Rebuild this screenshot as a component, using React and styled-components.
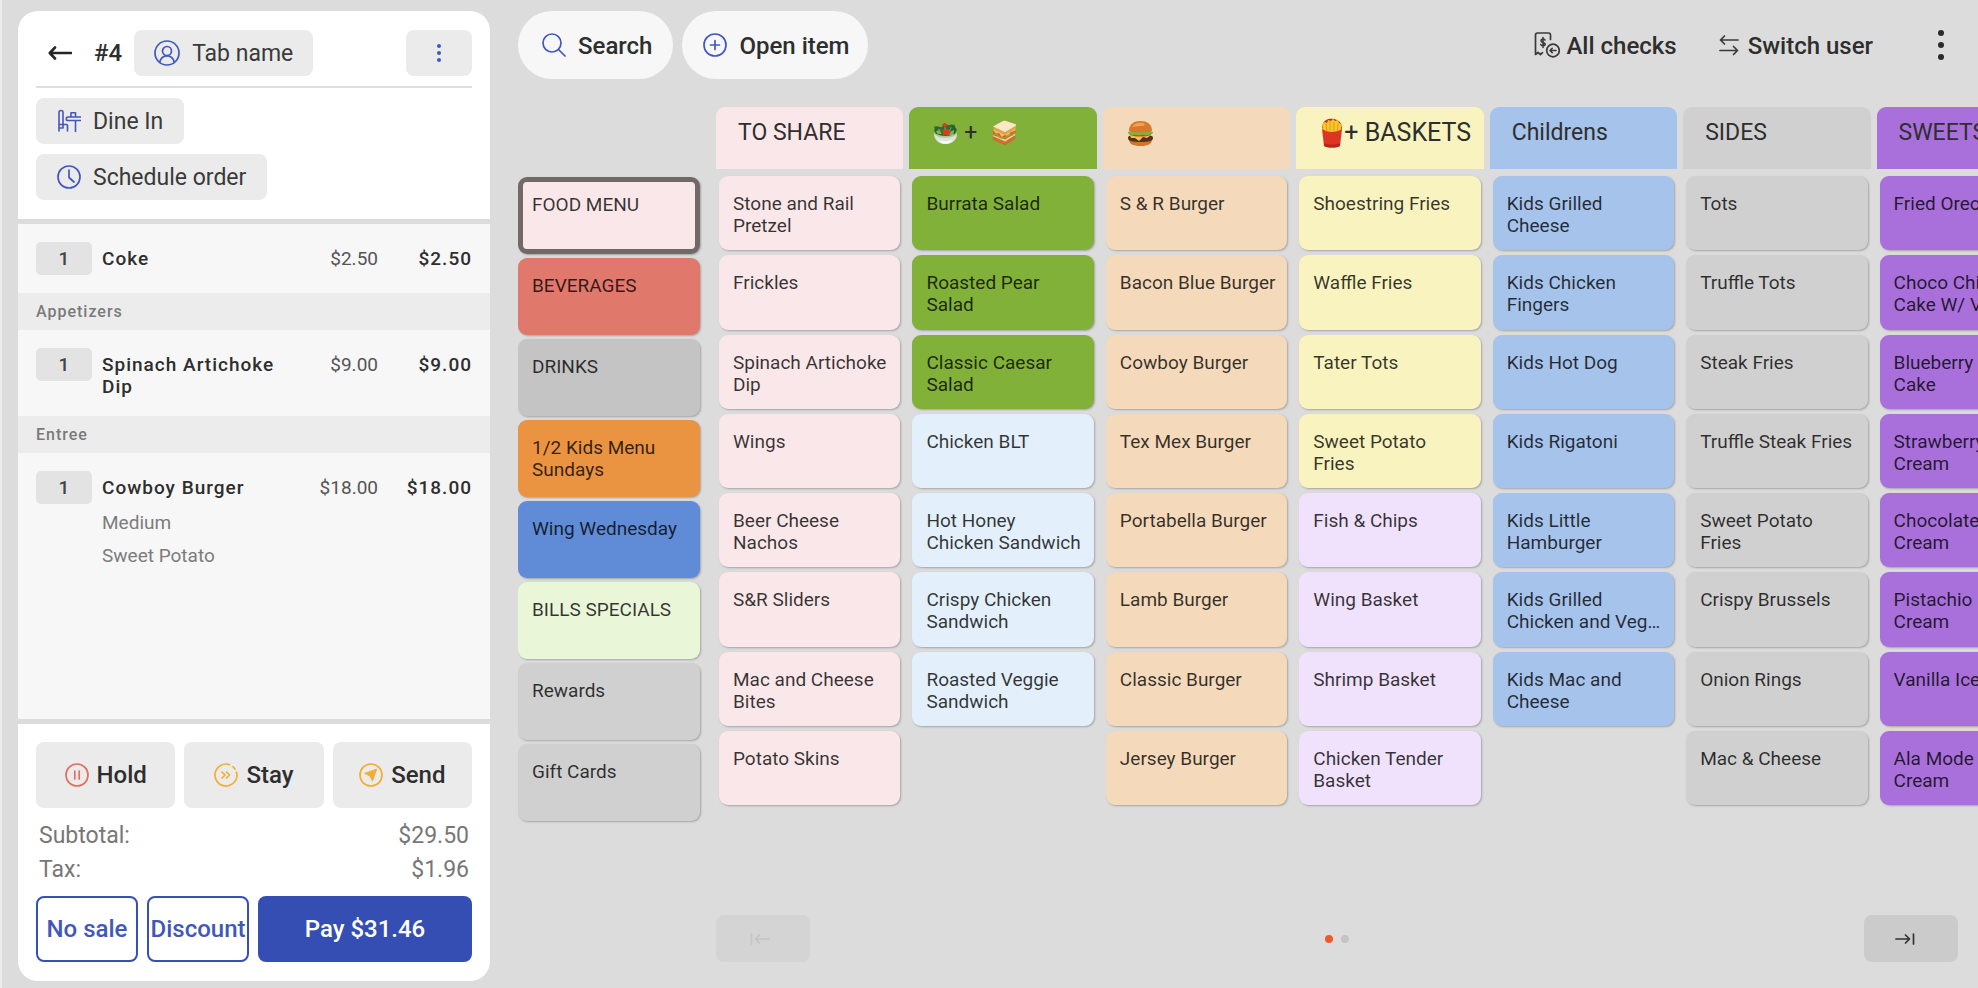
import React from "react";
import styled, { createGlobalStyle } from "styled-components";

const GlobalStyle = createGlobalStyle`
  *, *::before, *::after { box-sizing: border-box; }
  body {
    margin: 0;
    background: #dcdcdc;
    color: #2e2e2e;
    font-family: Roboto, "Liberation Sans", sans-serif;
    overflow: hidden;
  }
  button { font: inherit; color: inherit; border: 0; cursor: pointer; }
  h2, h3, ul, dl, dd, p { margin: 0; padding: 0; }
  ul { list-style: none; }
`;

const Page = styled.div`
  display: flex;
  height: 100vh;
  min-height: 840px;
  border-left: 2px solid #ececec;
  padding: 11px 0 7px 16px;
  gap: 28px;
`;

/* ---------- Check panel ---------- */

const Panel = styled.aside`
  flex: 0 0 472px;
  display: flex;
  flex-direction: column;
  background: #fff;
  border-radius: 20px;
  overflow: hidden;
`;

const PanelHeader = styled.header`
  padding: 19px 18px;
  border-bottom: 5px solid #dcdcdc;
`;

const HeaderRow = styled.div`
  display: flex;
  align-items: center;
  padding-bottom: 10px;
  border-bottom: 2px solid #dedede;
`;

const IconButton = styled.button`
  display: flex;
  padding: 10px 12px;
  background: none;
`;

const CheckNumber = styled.h2`
  margin: 0 12px 0 10px;
  font-size: 24px;
  line-height: 28px;
  font-weight: 500;
`;

const Chip = styled.button`
  display: flex;
  align-items: center;
  justify-content: center;
  gap: 12px;
  height: 46px;
  min-width: 66px;
  padding: 0 20px;
  background: #ebebeb;
  border-radius: 8px;
  font-size: 23px;
  color: #3a3a3a;
`;

const MoreChip = styled(Chip)`
  margin-left: auto;
`;

const ChipStack = styled.div`
  display: flex;
  flex-direction: column;
  align-items: flex-start;
  gap: 10px;
  padding-top: 10px;
`;

const OptionChip = styled(Chip)`
  padding: 0 21px;
`;

const Items = styled.div`
  flex: 1;
  background: #f7f7f7;
  overflow: hidden;
`;

const Course = styled.h3`
  padding: 0 18px;
  background: #ececec;
  font-size: 16px;
  line-height: 37px;
  font-weight: 500;
  letter-spacing: 1px;
  color: #7a7a7a;
`;

const Line = styled.div`
  display: grid;
  grid-template-columns: 56px 176px 1fr 84px;
  column-gap: 10px;
  padding: 18px 18px 18px;
  font-size: 19px;
  line-height: 22px;
`;

const Qty = styled.span`
  height: 33px;
  border-radius: 5px;
  background: #e3e3e3;
  line-height: 33px;
  text-align: center;
  font-weight: 500;
  color: #444;
`;

const ItemName = styled.span`
  padding-top: 6px;
  font-weight: 500;
  letter-spacing: 1px;
`;

const UnitPrice = styled.span`
  padding-top: 6px;
  text-align: right;
  color: #555;
`;

const LineTotal = styled(ItemName)`
  text-align: right;
`;

const Modifiers = styled.ul`
  grid-column: 2 / -1;
  padding-top: 2px;
  line-height: 33px;
  color: #7c7c7c;
`;

const PanelFooter = styled.footer`
  border-top: 5px solid #dcdcdc;
  padding: 18px 18px 19px;
`;

const Actions = styled.div`
  display: grid;
  grid-template-columns: repeat(3, 1fr);
  gap: 9px;
`;

const ActionButton = styled.button`
  display: flex;
  align-items: center;
  justify-content: center;
  gap: 8px;
  height: 66px;
  padding: 0;
  border-radius: 8px;
  background: #ebebeb;
  font-size: 24px;
  font-weight: 500;
`;

const Totals = styled.dl`
  padding: 11px 3px 9px;
`;

const TotalRow = styled.div`
  display: flex;
  justify-content: space-between;
  font-size: 23px;
  line-height: 34px;
  color: #777;
`;

const PayRow = styled.div`
  display: grid;
  grid-template-columns: 102px 102px 1fr;
  gap: 9px;
`;

const OutlineButton = styled(ActionButton)`
  border: 2px solid #3650b4;
  background: #fff;
  color: #3f58ba;
`;

const PayButton = styled(ActionButton)`
  background: #354eb3;
  color: #fff;
`;

/* ---------- Menu area ---------- */

const Main = styled.main`
  flex: 1;
  min-width: 0;
  display: flex;
  flex-direction: column;
  overflow: hidden;
`;

const Toolbar = styled.nav`
  display: flex;
  align-items: center;
  gap: 9px;
  height: 68px;
  padding-right: 21px;
`;

const PillButton = styled.button`
  display: flex;
  align-items: center;
  gap: 12px;
  height: 68px;
  padding: ${(p) => (p.$tight ? "0 18px 0 21px" : "0 21px 0 24px")};
  border-radius: 34px;
  background: #f7f7f7;
  font-size: 24px;
  font-weight: 500;
`;

const TextButton = styled.button`
  display: flex;
  align-items: center;
  gap: ${(p) => (p.$wide ? 9 : 6)}px;
  padding: 0;
  background: none;
  font-size: 24px;
  font-weight: 500;
`;

const ToolbarEnd = styled.div`
  display: flex;
  align-items: center;
  gap: 42px;
  margin-left: auto;
`;

const MoreButton = styled.button`
  display: flex;
  margin-left: 10px;
  padding: 8px 12px;
  background: none;
`;

const ButtonText = styled.span`
  padding-top: 2px;
`;

const Content = styled.div`
  flex: 1;
  min-height: 0;
  display: flex;
  gap: 16px;
  padding-top: 28px;
`;

const Tile = styled.button`
  display: block;
  width: 100%;
  min-width: 0;
  padding: 4px 10px 0 14px;
  border-radius: 9px;
  background: ${(p) => p.$color};
  box-shadow: 1px 1px 2px rgba(0, 0, 0, 0.25);
  text-align: left;
  font-size: 19px;
  line-height: 22px;
  color: rgba(0, 0, 0, 0.78);
`;

const TileLabel = styled.span`
  display: -webkit-box;
  -webkit-box-orient: vertical;
  -webkit-line-clamp: 2;
  height: 44px;
  overflow: hidden;
`;

const Categories = styled.div`
  flex: 0 0 182px;
  display: flex;
  flex-direction: column;
  gap: 4px;
  padding-top: 70px;
`;

const CategoryTile = styled(Tile)`
  height: 77px;
  padding: 0 ${(p) => (p.$selected ? 9 : 14)}px;
  border: ${(p) => (p.$selected ? "5px solid #716868" : "0")};
`;

const Board = styled.div`
  flex: 1;
  min-width: 0;
  display: flex;
  flex-direction: column;
`;

const Columns = styled.div`
  display: grid;
  grid-template-columns: repeat(7, minmax(0, 1fr));
  column-gap: 6px;
  flex: 1;
  min-height: 0;
  margin-right: -86px;
`;

const Column = styled.section`
  display: flex;
  flex-direction: column;
`;

const ColumnTitle = styled.h2`
  display: flex;
  align-items: center;
  height: 62px;
  padding: 0 0 10px 22px;
  border-radius: 9px 9px 0 0;
  background: ${(p) => p.$color};
  font-size: ${(p) => (p.$large ? 25 : 23)}px;
  line-height: 28px;
  font-weight: 400;
  white-space: pre;
`;

const ColumnTiles = styled.div`
  flex: 1;
  display: grid;
  grid-template-rows: repeat(8, minmax(0, 1fr));
  row-gap: 5px;
  padding: 7px 3px 0;
`;

const Pager = styled.div`
  display: flex;
  align-items: center;
  justify-content: space-between;
  padding: 110px 20px 19px 0;
`;

const PageButton = styled.button`
  display: flex;
  align-items: center;
  justify-content: center;
  width: 94px;
  height: 47px;
  padding: 0 12px 0 0;
  border-radius: 8px;
  background: #cbcbcb;
  &:disabled { background: #d4d4d4; color: #c4c4c4; padding: 0 6px 0 0; }
`;

const Dots = styled.div`
  display: flex;
  gap: 8px;
`;

const Dot = styled.span`
  width: 8px;
  height: 8px;
  border-radius: 50%;
  background: ${(p) => (p.$active ? "#f1592a" : "#c4c4c4")};
`;

/* ---------- Icons ---------- */

const Svg = ({ size = 24, w, h, box, children, color = "#4058c0", sw = 2 }) => (
  <svg
    width={w || size}
    height={h || size}
    viewBox={box || `0 0 ${w || size} ${h || size}`}
    fill="none"
    stroke={color}
    strokeWidth={sw}
    strokeLinecap="round"
    strokeLinejoin="round"
    aria-hidden="true"
  >
    {children}
  </svg>
);

const BackIcon = () => (
  <Svg w={24} h={16} color="#262626" sw={2.6}>
    <path d="M2 8h21M7 2.500 1.800 8 7 13.500" />
  </Svg>
);
const UserIcon = () => (
  <Svg size={26} sw={1.700}>
    <circle cx="13" cy="13" r="12" />
    <circle cx="13" cy="11" r="4.500" />
    <path d="M5.800 22c1-4 3.600-6.200 7.200-6.200s6.200 2.200 7.200 6.200" />
  </Svg>
);
const DotsIcon = ({ w, h, r, color }) => (
  <Svg w={w} h={h}>
    {[r, h / 2, h - r].map((y) => (
      <circle key={y} cx={w / 2} cy={y} r={r} fill={color} stroke="none" />
    ))}
  </Svg>
);
const DineIcon = () => (
  <Svg size={24} sw={1.600}>
    <path d="M2 22V3.500a2 2 0 0 1 4 0v11.500M2 15.500h7.500a1 1 0 0 1 1 1V22M2 19h4v-3.500" />
    <path d="M23.500 8H11a1.700 1.700 0 0 0 0 3.500h12.500M18.500 11.500V22.500M14 8V3.800h4.500V8" />
  </Svg>
);
const ClockIcon = () => (
  <Svg size={24} sw={1.700}>
    <circle cx="12" cy="12" r="11" />
    <path d="M12 5v7.500l5 4.500" />
  </Svg>
);
const HoldIcon = () => (
  <Svg size={24} color="#e0705f" sw={1.700}>
    <circle cx="12" cy="12" r="11" />
    <path d="M9.800 8v8M14.200 8v8" />
  </Svg>
);
const StayIcon = () => (
  <Svg size={24} color="#f2ae33" sw={1.700}>
    <path d="M15.500 1.600A11 11 0 1 0 23 12.500c0-1.200-.2-2.300-.5-3.300M19 3.700l2 2.300" />
    <path d="m8 9 3 3-3 3M12.500 9l3 3-3 3" />
  </Svg>
);
const SendIcon = () => (
  <Svg size={24} color="#f2ae33" sw={1.700}>
    <circle cx="12" cy="12" r="11" />
    <path d="m17.500 6.500-4 11.500-2.500-5-5-2.500z" fill="#f2ae33" strokeWidth="1" />
  </Svg>
);
const SearchIcon = () => (
  <Svg size={24} sw={1.700}>
    <circle cx="10" cy="10" r="9" />
    <path d="m16.500 16.500 6.500 6.500" />
  </Svg>
);
const PlusIcon = () => (
  <Svg size={24} sw={1.700}>
    <circle cx="12" cy="12" r="11" />
    <path d="M12 7.500v9M7.500 12h9" />
  </Svg>
);
const ChecksIcon = () => (
  <Svg size={26} color="#3a3a3a" sw={1.700}>
    <path d="M16.500 7.500V3a2 2 0 0 0-2-2h-11a2 2 0 0 0-2 2v19.500l2.500-2 2.500 2 2-1.800" />
    <path d="M11 8c-.4-1.300-4-1.500-4 .8 0 2 4.200 1.300 4.200 3.300 0 2.100-3.900 1.900-4.500.4M9 5.500v10" strokeWidth="1.600" />
    <circle cx="19" cy="18.500" r="6.300" />
    <path d="M22 18.500h-6M18.200 16.300 16 18.500l2.200 2.200" strokeWidth="1.600" />
  </Svg>
);
const SwitchIcon = () => (
  <Svg w={20} h={22} color="#3a3a3a" sw={1.700}>
    <path d="M19 6H1.500M5.500 2 1.500 6l4 4M1 16.500h17.500M14.500 12.500l4 4-4 4" />
  </Svg>
);
const PageIcon = ({ flip }) => (
  <Svg w={20} h={12} color={flip ? "#c4c4c4" : "#333"} sw={1.700}>
    {flip ? (
      <path d="M1.500 1v10M19 6H6M9.500 2 5.500 6l4 4" />
    ) : (
      <path d="M18.500 1v10M1 6h13M10.500 2l4 4-4 4" />
    )}
  </Svg>
);

const Emoji = styled.svg`
  flex: none;
  margin-left: 2px;
`;

const Salad = () => (
  <Emoji width="25" height="24" viewBox="0 0 26 24" role="img" aria-label="Salad">
    <path d="M1 9 4 5l5 1 3-4 4 2 4-1 2 3 3 2-3 7H4z" fill="#2f6b32" />
    <path d="m1 5 5 1 2 4-5 1zM16 8l6-5 2 5-3 5z" fill="#2d5f35" />
    <path d="m3 10 4-1 2 4H5zM17 11l5-2-1 5h-4z" fill="#7fb65a" />
    <path d="M9 3.500l3-2 3 1.500-2 3.500zM9.500 9l4-1.500 3 1 2 3-3 3-2-1-3 1z" fill="#dd3a20" />
    <path d="m5 8 3 1M12 6l1 3M19 6l-2 4" stroke="#5d9a45" strokeWidth="1.500" />
    <path d="M1 11.500c3 2.500 7 3.500 12 3.500s9-1 12-3.500C25 18 21 23.500 13 23.500S1 18 1 11.500z" fill="#a9cf8d" />
    <path d="M1 13c3 3 7 4 12 4s9-1 12-4c-.5 6-5 10.500-12 10.500S1.500 19 1 13z" fill="#dfe3de" />
    <path d="M6 19c4 2 10 2 14 0-1 3-4 4-7 4s-6-1-7-4z" fill="#fafaf8" />
  </Emoji>
);
const Sandwich = () => (
  <Emoji width="26" height="26" viewBox="0 0 26 26" role="img" aria-label="Sandwich">
    <path d="m1.500 16 12.500 5 10.500-6v3.500L14 25.500 1.500 19.500z" fill="#c9702c" />
    <path d="M1.500 16 4 14l10 4 9-5 1.500 2L14 21.500z" fill="#f0cd92" />
    <path d="m2 11 2-2 10 5 10.500-6v5L14 19.500 2 15z" fill="#e0562b" />
    <path d="m2 10 3 3.500 3-.5 2.500 4 3.500-2 3 1.500 2.500-4 5-2V8L14 14 4 9z" fill="#f4c544" />
    <path d="m2.500 14 3.500.5 3 3 5 .5 3-2.500 4-.5 3-3" stroke="#8aa83a" strokeWidth="1.500" fill="none" />
    <path d="M2 6.500 3 10l11 5 10.500-6L25 5.500 14 11z" fill="#dda25a" />
    <path d="M2 6.500 12 1c1-.5 2-.5 3 0l9.500 3.300c.7.300.8.900.3 1.400L14 12z" fill="#fbe9c6" />
  </Emoji>
);
const Burger = () => (
  <Emoji width="27" height="27" viewBox="0 0 27 27" role="img" aria-label="Burger">
    <path d="M2 19h23c0 5-4 7-11.500 7S2 24 2 19z" fill="#cf7428" />
    <path d="M1 18c0-3 4-3 12.500-3S26 15 26 18s-4 4-12.500 4S1 21 1 18z" fill="#59301c" />
    <path d="M3 15h21l-4 3-4-1-4 4-4-3-4 0z" fill="#f2c349" />
    <path d="M3 13h21v2c-6 2-15 2-21 0z" fill="#d6442a" />
    <path d="M1 12c4-2 21-2 25 0 0 3-3 2-5 3-3 1-4-1-7 0-3 1-5-1-8 0-2 0-5 0-5-3z" fill="#7cb53b" />
    <path d="M2 11C2 4 7 1 13.500 1S25 4 25 11c-6 2-17 2-23 0z" fill="#d8782c" />
    <path d="M5 7c2-4 7-5 11-4 3 1 2 3-2 3-4 0-6 1-9 1z" fill="#f0a451" />
  </Emoji>
);
const Fries = () => (
  <Emoji width="24" height="30" viewBox="0 0 22 30" role="img" aria-label="Fries">
    <path d="M1 9C2 2 7 0 13 1c5 1 8 4 8 9l-2 5H3z" fill="#c5281c" />
    <path d="M1 6l3-2 2 1 1-3 3 1 2-2 2 2 3-1 1 3 3 1-2 10H3z" fill="#f7c72c" />
    <path d="M5 6l1 7M9 3v10M13 4v10M17 6l-1 8" stroke="#e09a1c" fill="none" />
    <path d="M1 11c6 4 14 4 20 0l-2 17c-4 2-12 2-16 0z" fill="#de3424" />
    <path d="M3 25c5 2 11 2 16 0v3c-4 2-12 2-16 0z" fill="#b9251b" />
  </Emoji>
);

/* ---------- Data ---------- */

const PINK = "#fae7e9";
const GREEN = "#82b13a";
const PEACH = "#f4d9bb";
const YELLOW = "#f9f4bf";
const BLUE = "#a6c3ec";
const GRAY = "#d0d0d0";
const PURPLE = "#a970dc";
const SKY = "#e3effa";
const LILAC = "#f0e2fc";

const categories = [
  ["FOOD MENU", PINK],
  ["BEVERAGES", "#e0786c"],
  ["DRINKS", "#c4c4c4"],
  ["1/2 Kids Menu Sundays", "#ea9340"],
  ["Wing Wednesday", "#5f8bd7"],
  ["BILLS SPECIALS", "#e9f6d8"],
  ["Rewards", GRAY],
  ["Gift Cards", GRAY],
];

const tiles = (color, names) => names.map((name) => ({ name, color }));

const columns = [
  {
    id: "share",
    title: "TO SHARE",
    color: PINK,
    items: tiles(PINK, ["Stone and Rail Pretzel", "Frickles", "Spinach Artichoke Dip", "Wings", "Beer Cheese Nachos", "S&R Sliders", "Mac and Cheese Bites", "Potato Skins"]),
  },
  {
    id: "salads",
    title: <><Salad /> +  <Sandwich /></>,
    color: GREEN,
    items: [
      ...tiles(GREEN, ["Burrata Salad", "Roasted Pear Salad", "Classic Caesar Salad"]),
      ...tiles(SKY, ["Chicken BLT", "Hot Honey Chicken Sandwich", "Crispy Chicken Sandwich", "Roasted Veggie Sandwich"]),
    ],
  },
  {
    id: "burgers",
    title: <Burger />,
    color: PEACH,
    items: tiles(PEACH, ["S & R Burger", "Bacon Blue Burger", "Cowboy Burger", "Tex Mex Burger", "Portabella Burger", "Lamb Burger", "Classic Burger", "Jersey Burger"]),
  },
  {
    id: "baskets",
    title: <><Fries />+ BASKETS</>,
    large: true,
    color: YELLOW,
    items: [
      ...tiles(YELLOW, ["Shoestring Fries", "Waffle Fries", "Tater Tots", "Sweet Potato Fries"]),
      ...tiles(LILAC, ["Fish & Chips", "Wing Basket", "Shrimp Basket", "Chicken Tender Basket"]),
    ],
  },
  {
    id: "childrens",
    title: "Childrens",
    color: BLUE,
    items: tiles(BLUE, ["Kids Grilled Cheese", "Kids Chicken Fingers", "Kids Hot Dog", "Kids Rigatoni", "Kids Little Hamburger", "Kids Grilled Chicken and Veg…", "Kids Mac and Cheese"]),
  },
  {
    id: "sides",
    title: "SIDES",
    color: GRAY,
    items: tiles(GRAY, ["Tots", "Truffle Tots", "Steak Fries", "Truffle Steak Fries", "Sweet Potato Fries", "Crispy Brussels", "Onion Rings", "Mac & Cheese"]),
  },
  {
    id: "sweets",
    title: "SWEETS",
    color: PURPLE,
    items: tiles(PURPLE, ["Fried Oreos", "Choco Chip Lava Cake W/ Vanilla", "Blueberry Crumb Cake", "Strawberry Ice Cream", "Chocolate Ice Cream", "Pistachio Ice Cream", "Vanilla Ice Cream", "Ala Mode Ice Cream"]),
  },
];

function OrderLine({ name, unit, total, modifiers }) {
  return (
    <Line>
      <Qty>1</Qty>
      <ItemName>{name}</ItemName>
      <UnitPrice>{unit}</UnitPrice>
      <LineTotal>{total}</LineTotal>
      {modifiers && (
        <Modifiers>
          {modifiers.map((m) => (
            <li key={m}>{m}</li>
          ))}
        </Modifiers>
      )}
    </Line>
  );
}

function CheckPanel() {
  return (
    <Panel>
      <PanelHeader>
        <HeaderRow>
          <IconButton aria-label="Back"><BackIcon /></IconButton>
          <CheckNumber>#4</CheckNumber>
          <Chip><UserIcon />Tab name</Chip>
          <MoreChip aria-label="Check options"><DotsIcon w={6} h={18} r={2} color="#4058c0" /></MoreChip>
        </HeaderRow>
        <ChipStack>
          <OptionChip><DineIcon />Dine In</OptionChip>
          <OptionChip><ClockIcon />Schedule order</OptionChip>
        </ChipStack>
      </PanelHeader>
      <Items>
        <OrderLine name="Coke" unit="$2.50" total="$2.50" />
        <Course>Appetizers</Course>
        <OrderLine name="Spinach Artichoke Dip" unit="$9.00" total="$9.00" />
        <Course>Entree</Course>
        <OrderLine name="Cowboy Burger" unit="$18.00" total="$18.00" modifiers={["Medium", "Sweet Potato"]} />
      </Items>
      <PanelFooter>
        <Actions>
          <ActionButton><HoldIcon />Hold</ActionButton>
          <ActionButton><StayIcon />Stay</ActionButton>
          <ActionButton><SendIcon />Send</ActionButton>
        </Actions>
        <Totals>
          <TotalRow><dt>Subtotal:</dt><dd>$29.50</dd></TotalRow>
          <TotalRow><dt>Tax:</dt><dd>$1.96</dd></TotalRow>
        </Totals>
        <PayRow>
          <OutlineButton>No sale</OutlineButton>
          <OutlineButton>Discount</OutlineButton>
          <PayButton>Pay $31.46</PayButton>
        </PayRow>
      </PanelFooter>
    </Panel>
  );
}

export default function App() {
  return (
    <>
      <GlobalStyle />
      <Page>
        <CheckPanel />
        <Main>
          <Toolbar>
            <PillButton><SearchIcon /><ButtonText>Search</ButtonText></PillButton>
            <PillButton $tight><PlusIcon /><ButtonText>Open item</ButtonText></PillButton>
            <ToolbarEnd>
              <TextButton><ChecksIcon /><ButtonText>All checks</ButtonText></TextButton>
              <TextButton $wide><SwitchIcon /><ButtonText>Switch user</ButtonText></TextButton>
              <MoreButton aria-label="More"><DotsIcon w={8} h={30} r={3} color="#2a2a2a" /></MoreButton>
            </ToolbarEnd>
          </Toolbar>
          <Content>
            <Categories>
              {categories.map(([name, color], i) => (
                <CategoryTile key={name} $color={color} $selected={i === 0}>
                  <TileLabel>{name}</TileLabel>
                </CategoryTile>
              ))}
            </Categories>
            <Board>
              <Columns>
                {columns.map((c) => (
                  <Column key={c.id}>
                    <ColumnTitle $color={c.color} $large={c.large}>{c.title}</ColumnTitle>
                    <ColumnTiles>
                      {c.items.map((t) => (
                        <Tile key={t.name} $color={t.color}><TileLabel>{t.name}</TileLabel></Tile>
                      ))}
                    </ColumnTiles>
                  </Column>
                ))}
              </Columns>
              <Pager>
                <PageButton disabled aria-label="First page"><PageIcon flip /></PageButton>
                <Dots><Dot $active /><Dot /></Dots>
                <PageButton aria-label="Last page"><PageIcon /></PageButton>
              </Pager>
            </Board>
          </Content>
        </Main>
      </Page>
    </>
  );
}
